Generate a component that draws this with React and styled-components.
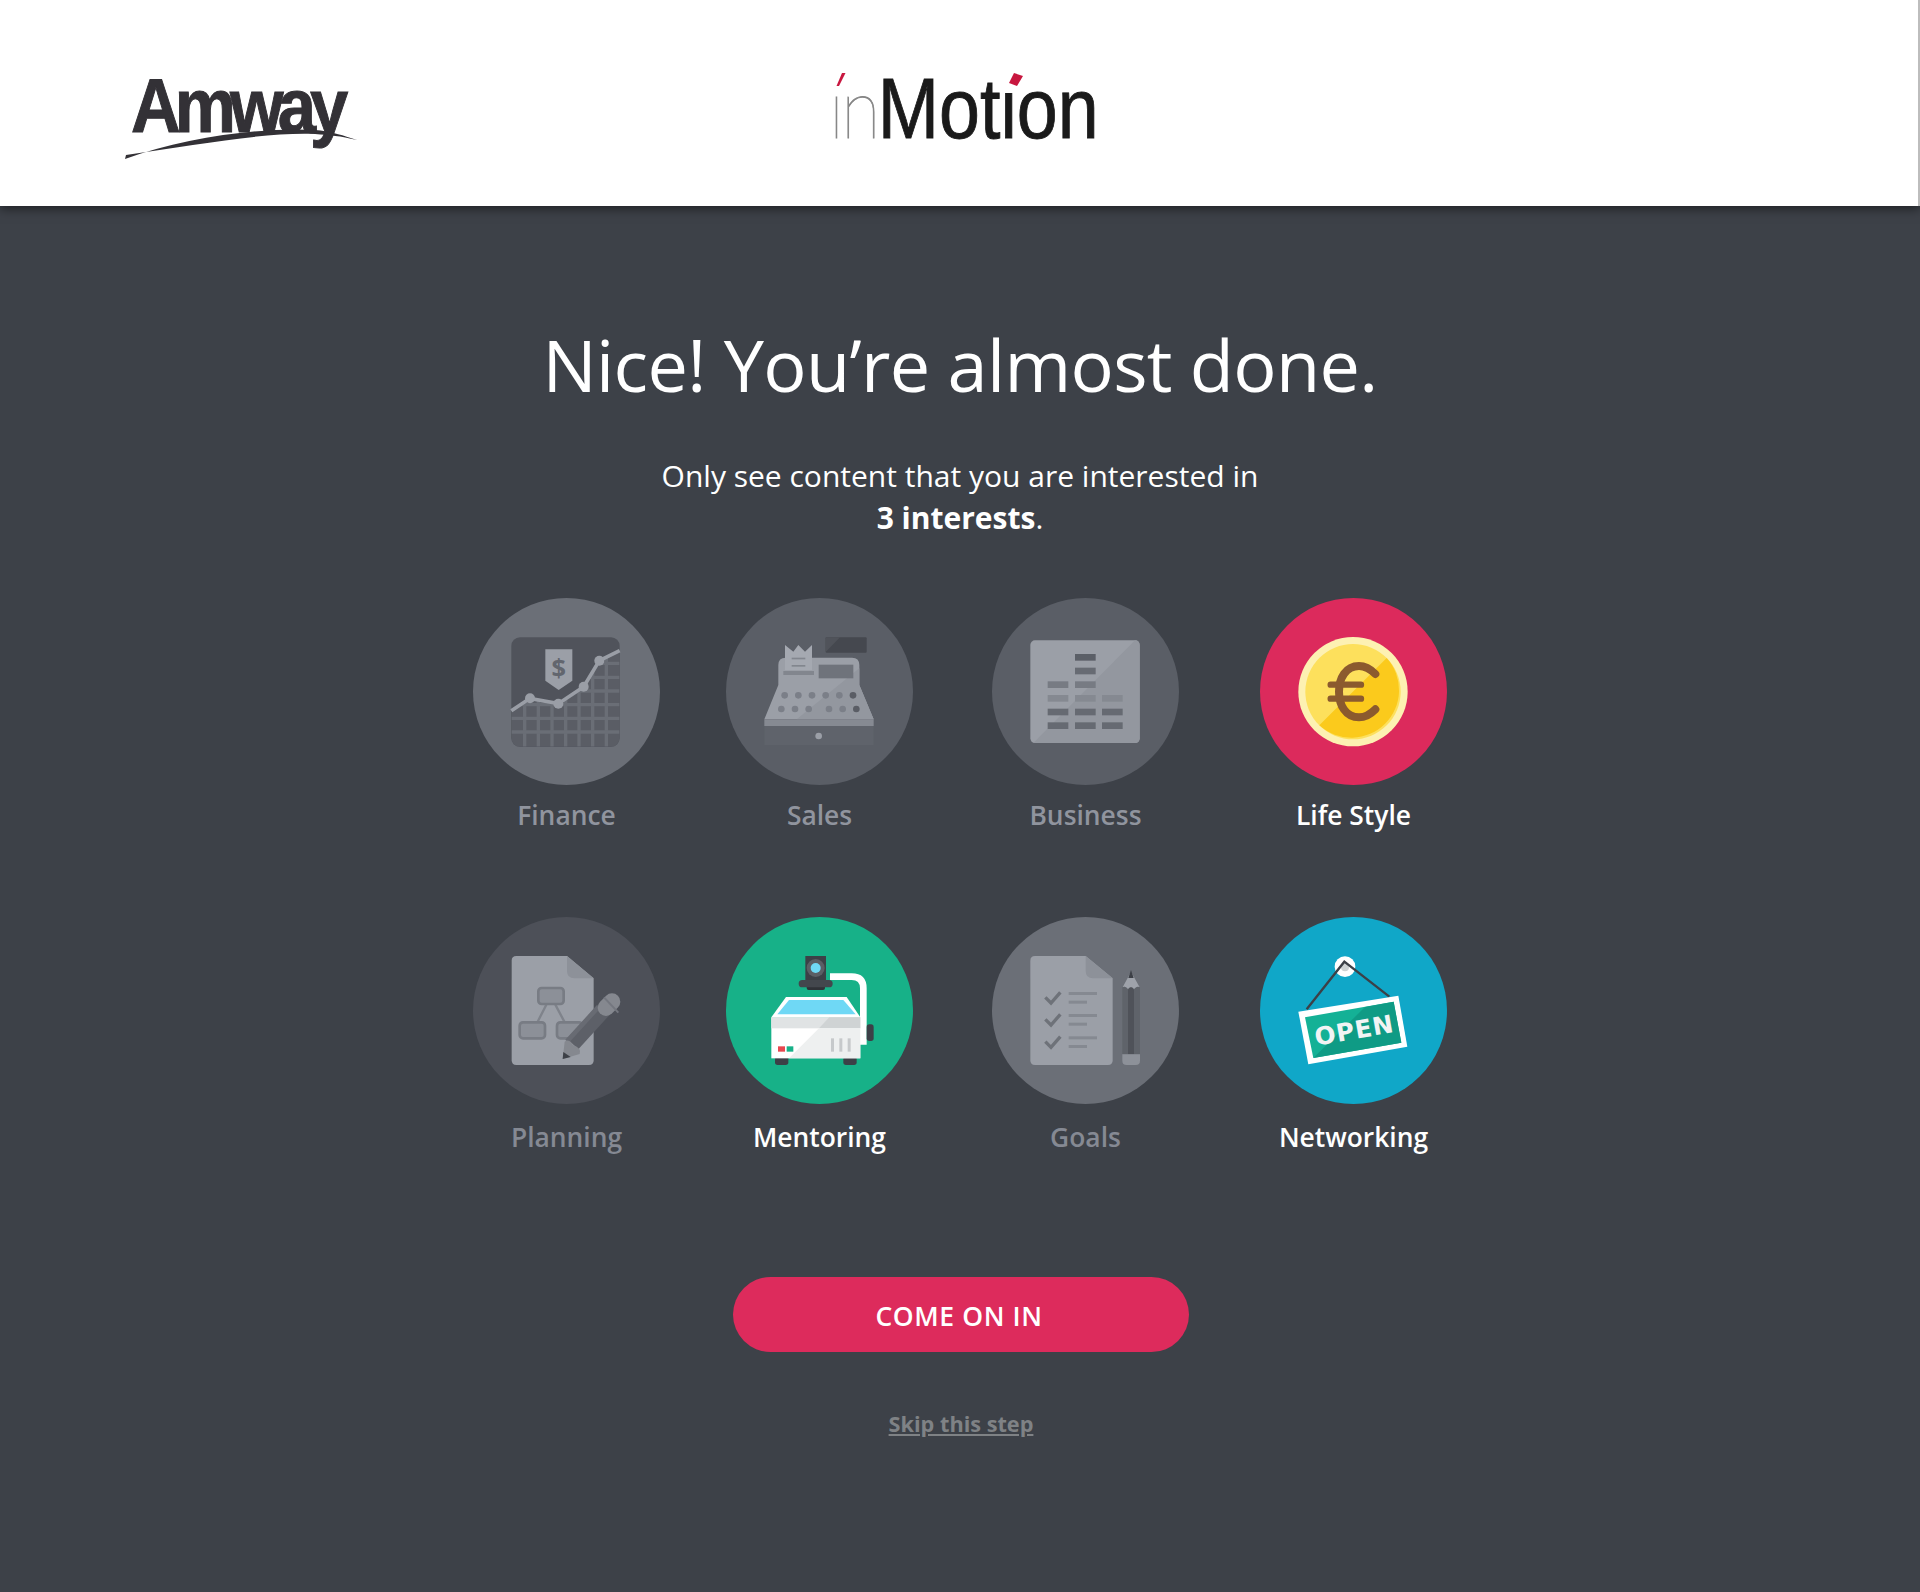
import React from 'react';
import styled, { createGlobalStyle } from 'styled-components';

const GlobalStyle = createGlobalStyle`
	html, body {
		margin: 0;
		padding: 0;
		background: #3d4148;
	}
	* {
		box-sizing: border-box;
	}
`;

const Page = styled.div`
	min-height: 1592px;
	background: #3d4148;
	font-family: "Open Sans", "Noto Sans", sans-serif;
	color: #fff;
`;

const Header = styled.header`
	position: relative;
	display: flex;
	align-items: flex-start;
	height: 206px;
	padding-left: 131px;
	background: #fff;
	border-right: 2px solid #bdbdbd;
	box-shadow: 0 3px 10px rgba(0, 0, 0, 0.5);
`;

const AmwayLogo = styled.div`
	position: relative;
	width: 214px;
	height: 100px;
	margin-top: 64px;
	margin-right: 484px;
`;

const AmwayWord = styled.span`
	display: block;
	font-family: "Liberation Sans", Arial, sans-serif;
	font-weight: 700;
	font-size: 76px;
	line-height: 84px;
	letter-spacing: -6.5px;
	color: #333136;
	transform: scaleX(0.905);
	transform-origin: left top;
	-webkit-text-stroke: 1px #333136;
`;

const Swoosh = styled.svg`
	position: absolute;
	left: -6px;
	top: 60px;
`;

const MotionLogo = styled.div`
	position: relative;
	width: 262px;
	height: 110px;
	margin-top: 60px;
	font-family: "Liberation Sans", Arial, sans-serif;
	font-size: 86px;
	line-height: 92px;
	white-space: nowrap;
`;

const MotionWord = styled.div`
	transform: scaleX(0.855);
	transform-origin: left top;
`;

const LightPart = styled.span`
	font-family: "Lato", sans-serif;
	font-weight: 100;
	font-size: 84px;
	letter-spacing: -3px;
	color: #858585;
	-webkit-text-stroke: 0.8px #858585;
`;

const DarkPart = styled.span`
	color: #1a1a1a;
	-webkit-text-stroke: 0.9px #1a1a1a;
`;

/* the accents stand in for the dots of the two i's, so they sit on a white patch */
const Accent = styled.svg`
	position: absolute;
	top: 13px;
	left: ${(p) => p.$left}px;
	background: #fff;
`;

const Main = styled.main`
	display: flex;
	flex-direction: column;
	align-items: center;
	padding-top: 122px;
`;

const Title = styled.h1`
	margin: 0;
	font-weight: 400;
	font-size: 72px;
	line-height: 72px;
	letter-spacing: -0.65px;
	text-align: center;
`;

const Subtitle = styled.p`
	margin: 55px 0 0;
	font-size: 30px;
	line-height: 42px;
	text-align: center;

	strong {
		font-weight: 700;
	}
`;

const InterestGrid = styled.div`
	display: grid;
	grid-template-columns: 253px 266px 268px 187px;
	row-gap: 85px;
	margin-top: 59px;
`;

const Interest = styled.div`
	display: flex;
	flex-direction: column;
	align-items: center;
	width: 187px;
`;

const Circle = styled.div`
	width: 187px;
	height: 187px;
	border-radius: 50%;
	background: ${(p) => p.$bg};

	svg {
		display: block;
	}
`;

const Label = styled.div`
	margin-top: ${(p) => p.$gap}px;
	font-weight: 600;
	font-size: 26.4px;
	line-height: 34px;
	white-space: nowrap;
	color: ${(p) => p.$color};
`;

const EnterButton = styled.button`
	width: 456px;
	height: 75px;
	margin: 123px 0 0 2px;
	padding: 2px 4px 0 0;
	border: 0;
	border-radius: 38px;
	background: #dd2b5c;
	color: #fff;
	font-family: inherit;
	font-weight: 600;
	font-size: 26.5px;
	letter-spacing: 0.6px;
`;

const SkipLink = styled.a`
	margin: 57px 0 0 2px;
	font-weight: 700;
	font-size: 21.7px;
	line-height: 30px;
	color: #7f8285;
	text-decoration: underline;
`;

const Icon = ({ x, y, children }) => (
	<svg width="187" height="187" viewBox={`${x} ${y} 561 561`}>
		{children}
	</svg>
);

const FinanceIcon = () => (
	<Icon x={40} y={24}>
		<defs>
			<clipPath id="finance-area">
				<path d="M155 362 L211 325 L296 341 L372 290 L419 212 L480 182 V470 H155 Z" />
			</clipPath>
		</defs>
		<rect x="155" y="142" width="325" height="328" rx="26" fill="#50535b" />
		<g clipPath="url(#finance-area)">
			<rect x="155" y="142" width="325" height="328" rx="26" fill="#5a5d65" />
			<g stroke="#6a6e76" strokeWidth="10" fill="none">
				<path d="M195 142 V470 M236 142 V470 M277 142 V470 M318 142 V470 M358 142 V470 M399 142 V470 M440 142 V470" />
				<path d="M155 220 H480 M155 262 H480 M155 303 H480 M155 344 H480 M155 385 H480 M155 426 H480" />
			</g>
		</g>
		<path d="M155 362 L211 325 L296 341 L372 290 L419 212 L480 182" fill="none" stroke="#9a9ea6" strokeWidth="11" />
		<circle cx="211" cy="325" r="15" fill="#9a9ea6" />
		<circle cx="296" cy="341" r="15" fill="#9a9ea6" />
		<circle cx="372" cy="290" r="15" fill="#9a9ea6" />
		<circle cx="419" cy="212" r="15" fill="#9a9ea6" />
		<path d="M257 178 H338 V272 L297 300 L257 272 Z" fill="#9b9fa7" />
		<text x="297" y="260" textAnchor="middle" fontFamily="Open Sans" fontWeight="700" fontSize="76" fill="#62666e">$</text>
	</Icon>
);

const SalesIcon = () => {
	const topRow = [974, 1015, 1056, 1097, 1138];
	const lowRow = [964, 1005, 1046, 1107, 1148];
	return (
		<Icon x={798} y={24}>
			<rect x="1097" y="142" width="123" height="46" rx="3" fill="#45484f" />
			<path d="M1097 188 V186 L1140 142 H1097 Z" fill="#50535a" />
			<path d="M913 388 L955 285 V225 Q955 203 977 203 H1176 Q1198 203 1198 225 V285 L1241 388 Z" fill="#9b9fa7" />
			<path d="M1010 388 L1198 235 V285 L1241 388 Z" fill="#93979f" />
			<rect x="913" y="388" width="328" height="20" fill="#868a92" />
			<rect x="913" y="408" width="328" height="57" fill="#5f636b" />
			<circle cx="1076" cy="438" r="10" fill="#9b9fa7" />
			<path d="M975 240 V165 L1000 185 L1015 165 L1035 185 L1056 165 V240 Z" fill="#a5a9b1" />
			<rect x="995" y="203" width="41" height="5" fill="#82868e" />
			<rect x="995" y="225" width="41" height="5" fill="#82868e" />
			<rect x="970" y="243" width="92" height="12" fill="#82868e" />
			<rect x="1076" y="224" width="104" height="41" fill="#6f737b" />
			{topRow.map((cx) => <circle key={cx} cx={cx} cy="316" r="10" fill="#7b7f88" />)}
			{lowRow.map((cx) => <circle key={cx} cx={cx} cy="357" r="10" fill="#7b7f88" />)}
			<circle cx="1179" cy="316" r="10" fill="#5a5d65" />
			<circle cx="1189" cy="357" r="10" fill="#5a5d65" />
		</Icon>
	);
};

const BusinessIcon = () => {
	const bars = [
		[285, 192, '#5b5f67'], [285, 233, '#676b73'],
		[203, 274, '#777b83'], [285, 274, '#777b83'],
		[203, 315, '#858991'], [285, 315, '#858991'], [366, 315, '#858991'],
		[203, 356, '#666a72'], [285, 356, '#666a72'], [366, 356, '#666a72'],
		[203, 397, '#666a72'], [285, 397, '#666a72'], [366, 397, '#666a72'],
	];
	return (
		<Icon x={36} y={24}>
			<rect x="151" y="151" width="328" height="308" rx="14" fill="#9b9fa7" />
			<path d="M465 151 Q479 151 479 165 V445 Q479 459 465 459 H160 Z" fill="#93979f" />
			{bars.map(([x, y, fill]) => (
				<rect key={`${x}-${y}`} x={x} y={y} width="62" height="20" fill={fill} />
			))}
		</Icon>
	);
};

const LifeStyleIcon = () => (
	<Icon x={840} y={24}>
		<circle cx="1119" cy="305" r="164" fill="#fdf1b2" />
		<circle cx="1119" cy="305" r="143" fill="#fde05c" />
		<path d="M1220 204 A143 143 0 0 1 1018 406 Z" fill="#fbca1c" />
		<g fill="none" stroke="#8b5a2e" strokeLinecap="round">
			<path strokeWidth="24" d="M1186 252 C1170 236 1150 228 1137 228 C1097 228 1077 265 1077 305 C1077 345 1097 382 1137 382 C1150 382 1170 374 1186 358" />
			<path strokeWidth="19" d="M1052 284 H1143 M1052 326 H1143" />
		</g>
	</Icon>
);

const PlanningIcon = () => (
	<Icon x={38} y={21}>
		<path d="M168 138 H320 L400 205 V451 Q400 465 386 465 H168 Q154 465 154 451 V152 Q154 138 168 138 Z" fill="#9b9fa7" />
		<path d="M320 138 L400 205 H342 Q320 205 320 183 Z" fill="#8d9199" />
		<g fill="none" stroke="#7f838b" strokeWidth="7">
			<path d="M258 284 L232 335 M285 284 L312 335" />
		</g>
		<g fill="#8c9098" stroke="#787c84" strokeWidth="8">
			<rect x="234" y="234" width="76" height="48" rx="10" />
			<rect x="178" y="337" width="76" height="48" rx="10" />
			<rect x="290" y="337" width="76" height="48" rx="10" />
		</g>
		<path d="M337 402 L430 300" stroke="#5d6068" strokeWidth="46" fill="none" />
		<path d="M320 394 L415 290" stroke="#686b73" strokeWidth="14" fill="none" />
		<path d="M437 293 L455 275" stroke="#85888f" strokeWidth="50" strokeLinecap="round" fill="none" />
		<path d="M431 262 L474 308" stroke="#74777f" strokeWidth="6" fill="none" />
		<path d="M313 395 Q325 385 338 405 Q365 415 358 432 L307 447 Z" fill="#85888f" />
		<path d="M307 447 L309 426 L331 441 Z" fill="#3d4047" />
	</Icon>
);

const MentoringIcon = () => (
	<Icon x={798} y={21}>
		<path d="M1110 200 H1175 Q1210 200 1210 235 V404" fill="none" stroke="#fff" strokeWidth="20" />
		<rect x="1220" y="343" width="21" height="50" rx="8" fill="#3c4047" />
		<rect x="1036" y="138" width="62" height="74" fill="#3c4047" />
		<circle cx="1067" cy="174" r="27" fill="#5b5e65" />
		<circle cx="1067" cy="174" r="15" fill="#6fd8f5" />
		<rect x="1040" y="226" width="55" height="14" rx="6" fill="#2f3237" />
		<rect x="1016" y="210" width="102" height="22" rx="11" fill="#43474d" />
		<rect x="945" y="440" width="40" height="25" rx="8" fill="#3c4047" />
		<rect x="1150" y="440" width="40" height="25" rx="8" fill="#3c4047" />
		<path d="M934 322 L978 261 H1160 L1201 322 Z" fill="#fff" />
		<path d="M952 313 L987 270 H1150 L1187 313 Z" fill="#6fd8f5" />
		<rect x="934" y="322" width="267" height="123" fill="#fff" />
		<rect x="934" y="322" width="267" height="33" fill="#e0e3e4" />
		<path d="M1108 322 H1201 V355 H1077 Z" fill="#cfd3d4" />
		<path d="M1077 355 H1201 V445 H987 Z" fill="#eef0f0" />
		<rect x="954" y="409" width="21" height="16" fill="#e8474f" />
		<rect x="980" y="409" width="20" height="16" fill="#17b188" />
		<rect x="1113" y="385" width="9" height="40" fill="#c6c9cb" />
		<rect x="1138" y="385" width="9" height="40" fill="#c6c9cb" />
		<rect x="1163" y="385" width="9" height="40" fill="#c6c9cb" />
	</Icon>
);

const GoalsIcon = () => {
	const rows = [0, 66, 133];
	return (
		<Icon x={36} y={21}>
			<path d="M165 138 H317 L398 205 V451 Q398 465 384 465 H165 Q151 465 151 451 V152 Q151 138 165 138 Z" fill="#9b9fa7" />
			<path d="M317 138 L398 205 H339 Q317 205 317 183 Z" fill="#8d9199" />
			{rows.map((dy) => (
				<g key={dy}>
					<path d={`M196 ${262 + dy} L213 ${279 + dy} L241 ${247 + dy}`} fill="none" stroke="#6e7279" strokeWidth="10" />
					<rect x="266" y={246 + dy} width="85" height="9" fill="#858991" />
					<rect x="266" y={272 + dy} width="55" height="9" fill="#858991" />
				</g>
			))}
			<path d="M453 185 L428 232 Q436 226 444 238 Q453 226 462 238 Q471 226 479 232 Z" fill="#9ea2aa" />
			<path d="M453 180 L445 204 H461 Z" fill="#3d4047" />
			<path d="M427 232 Q436 226 444 238 V433 H427 Z" fill="#5f636a" />
			<path d="M444 238 Q453 226 462 238 V433 H444 Z" fill="#4f5259" />
			<path d="M462 238 Q471 226 480 232 V433 H462 Z" fill="#5f636a" />
			<path d="M427 433 H480 V452 Q480 465 467 465 H440 Q427 465 427 452 Z" fill="#8d9199" />
		</Icon>
	);
};

const NetworkingIcon = () => (
	<Icon x={840} y={21}>
		<circle cx="1095" cy="170" r="31" fill="#fff" />
		<circle cx="1095" cy="172" r="12" fill="#cfd3d4" />
		<path d="M980 298 L1093 155 L1228 260" fill="none" stroke="#3c4047" strokeWidth="7" />
		<path d="M955 305 L1255 257 L1282 410 L985 463 Z" fill="#fff" />
		<path d="M975 322 L1241 275 L1264 398 L1000 444 Z" fill="#14b196" />
		<path d="M1155 291 L1241 275 L1264 398 L1000 444 Z" fill="#0f9b85" />
		<text
			x="1121"
			y="387"
			textAnchor="middle"
			transform="rotate(-10 1121 360)"
			fontFamily="DejaVu Sans"
			fontWeight="700"
			fontSize="74"
			fill="#f2f4f4"
			textLength="238"
		>
			OPEN
		</text>
	</Icon>
);

const DIM = '#90949e';
const FAINT = '#858993';

const firstRow = [
	{ name: 'Finance', bg: '#6b6f77', color: DIM, Art: FinanceIcon },
	{ name: 'Sales', bg: '#5a5e66', color: DIM, Art: SalesIcon },
	{ name: 'Business', bg: '#5a5e66', color: DIM, Art: BusinessIcon },
	{ name: 'Life Style', bg: '#dc2a5c', color: '#fff', Art: LifeStyleIcon },
];

const secondRow = [
	{ name: 'Planning', bg: '#4d5058', color: FAINT, Art: PlanningIcon },
	{ name: 'Mentoring', bg: '#17b188', color: '#fff', Art: MentoringIcon },
	{ name: 'Goals', bg: '#6b6f77', color: FAINT, Art: GoalsIcon },
	{ name: 'Networking', bg: '#10a7c8', color: '#fff', Art: NetworkingIcon },
];

function App() {
	return (
		<Page>
			<GlobalStyle />
			<Header>
				<AmwayLogo>
					<AmwayWord>Amway</AmwayWord>
					<Swoosh width="232" height="36" viewBox="0 0 232 36">
						<path d="M0 35 C60 13 140 3 190 6 C205 7 220 12 232 16 C215 12 205 11 190 10 C140 8 70 21 1 31 Z" fill="#333136" />
					</Swoosh>
				</AmwayLogo>
				<MotionLogo>
					<MotionWord>
						<LightPart>in</LightPart>
						<DarkPart>Motion</DarkPart>
					</MotionWord>
					<Accent $left={2} width="16" height="21" viewBox="-5 0 16 21">
						<path d="M6 0 H9.5 L3 13 H0.5 Z" fill="#c8173f" />
					</Accent>
					<Accent $left={175} width="19" height="20" viewBox="-5 0 19 20">
						<path d="M5 0 L14 3 L8 13 L0 10 Z" fill="#c8173f" />
					</Accent>
				</MotionLogo>
			</Header>
			<Main>
				<Title>Nice! You’re almost done.</Title>
				<Subtitle>
					Only see content that you are interested in
					<br />
					<strong>3 interests</strong>.
				</Subtitle>
				<InterestGrid>
					{firstRow.map(({ name, bg, color, Art }) => (
						<Interest key={name}>
							<Circle $bg={bg}><Art /></Circle>
							<Label $gap={13} $color={color}>{name}</Label>
						</Interest>
					))}
					{secondRow.map(({ name, bg, color, Art }) => (
						<Interest key={name}>
							<Circle $bg={bg}><Art /></Circle>
							<Label $gap={16} $color={color}>{name}</Label>
						</Interest>
					))}
				</InterestGrid>
				<EnterButton>COME ON IN</EnterButton>
				<SkipLink href="#">Skip this step</SkipLink>
			</Main>
		</Page>
	);
}

export default App;
